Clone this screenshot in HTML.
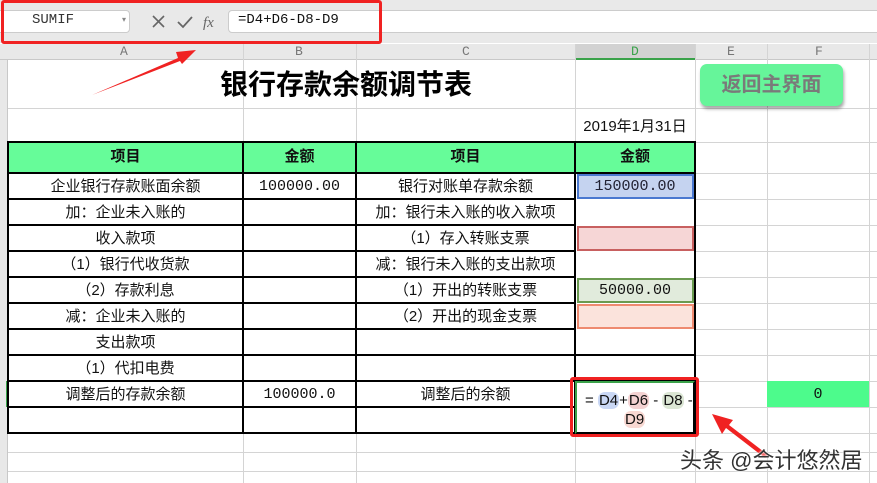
<!DOCTYPE html>
<html><head><meta charset="utf-8"><style>
*{margin:0;padding:0;box-sizing:border-box}
body{width:877px;height:483px;overflow:hidden;background:#fff;position:relative;font-family:"Liberation Sans","Noto Sans CJK SC",sans-serif;font-size:15px;color:#111}
.a{position:absolute}
.t{position:absolute;text-align:center;line-height:26px;white-space:nowrap}
.vl{position:absolute;width:1px;background:#d4d4d4}
.hl{position:absolute;height:1px;background:#d4d4d4}
.bv{position:absolute;width:2px;background:#000}
.bh{position:absolute;height:2px;background:#000}
.mono{font-family:"Liberation Mono","Noto Sans CJK SC",monospace;font-size:15px}
</style></head><body>
<div class="a" style="left:0;top:0;width:877px;height:43px;background:#e9e9e9"></div>
<div class="a" style="left:-5px;top:10px;width:135px;height:23px;background:#fff;border:1px solid #ccc;border-radius:4px"></div>
<div class="a mono" style="left:32px;top:12px;font-size:14px;color:#333">SUMIF</div>
<div class="a" style="left:122px;top:15px;font-size:8px;color:#888">▾</div>
<svg class="a" style="left:150px;top:12px" width="75" height="20"><path d="M3 4l11 11M14 4L3 15" stroke="#666" stroke-width="1.6" fill="none"/><path d="M28 10l5 5 9-10" stroke="#666" stroke-width="1.8" fill="none"/><text x="53" y="15" font-family="Liberation Serif" font-style="italic" font-size="15" fill="#666">fx</text></svg>
<div class="a" style="left:228px;top:10px;width:660px;height:23px;background:#fff;border:1px solid #ccc;border-radius:4px"></div>
<div class="a mono" style="left:238px;top:12px;font-size:14px;color:#111">=D4+D6-D8-D9</div>
<div class="a" style="left:1px;top:0px;width:381px;height:44px;border:3px solid #f02222;border-radius:3px"></div>
<div class="a" style="left:0;top:44px;width:877px;height:16px;background:#e8e8e8;border-bottom:1px solid #c8c8c8"></div>
<div class="a" style="left:575px;top:44px;width:120px;height:16px;background:#d2d2d2;border-bottom:2px solid #3aa24a"></div>
<div class="a" style="left:0;top:60px;width:8px;height:423px;background:#e8e8e8;border-right:1px solid #c8c8c8"></div>
<div class="a" style="left:6px;top:381px;width:2px;height:26px;background:#3aa24a"></div>
<div class="a mono" style="left:120px;top:44px;font-size:13px;color:#777;line-height:16px">A</div>
<div class="a mono" style="left:295px;top:44px;font-size:13px;color:#777;line-height:16px">B</div>
<div class="a mono" style="left:462px;top:44px;font-size:13px;color:#777;line-height:16px">C</div>
<div class="a mono" style="left:631px;top:44px;font-size:13px;color:#3aa24a;line-height:16px">D</div>
<div class="a mono" style="left:727px;top:44px;font-size:13px;color:#777;line-height:16px">E</div>
<div class="a mono" style="left:815px;top:44px;font-size:13px;color:#777;line-height:16px">F</div>
<div class="vl" style="left:243px;top:44px;height:439px"></div>
<div class="vl" style="left:356px;top:44px;height:439px"></div>
<div class="vl" style="left:575px;top:44px;height:439px"></div>
<div class="vl" style="left:695px;top:44px;height:439px"></div>
<div class="vl" style="left:767px;top:44px;height:439px"></div>
<div class="vl" style="left:869px;top:44px;height:439px"></div>
<div class="hl" style="left:8px;top:108px;width:869px"></div>
<div class="hl" style="left:8px;top:142px;width:869px"></div>
<div class="hl" style="left:695px;top:173px;width:182px"></div>
<div class="hl" style="left:695px;top:199px;width:182px"></div>
<div class="hl" style="left:695px;top:225px;width:182px"></div>
<div class="hl" style="left:695px;top:251px;width:182px"></div>
<div class="hl" style="left:695px;top:277px;width:182px"></div>
<div class="hl" style="left:695px;top:303px;width:182px"></div>
<div class="hl" style="left:695px;top:329px;width:182px"></div>
<div class="hl" style="left:695px;top:355px;width:182px"></div>
<div class="hl" style="left:695px;top:381px;width:182px"></div>
<div class="hl" style="left:695px;top:407px;width:182px"></div>
<div class="hl" style="left:8px;top:433px;width:869px"></div>
<div class="hl" style="left:8px;top:452px;width:869px"></div>
<div class="hl" style="left:8px;top:471px;width:869px"></div>
<div class="a" style="left:220px;top:63px;font-size:28px;font-weight:bold;color:#000">银行存款余额调节表</div>
<div class="a" style="left:700px;top:64px;width:143px;height:42px;background:#66f59a;border-radius:7px;box-shadow:1px 3px 3px rgba(0,0,0,.35);text-align:center;line-height:42px;font-size:20px;font-weight:bold;color:#7a7a7a">返回主界面</div>
<div class="t" style="left:575px;top:114px;width:120px">2019年1月31日</div>
<div class="a" style="left:8px;top:142px;width:687px;height:31px;background:#66fc99"></div>
<div class="t" style="left:8px;top:144px;width:235px;font-weight:bold">项目</div>
<div class="t" style="left:243px;top:144px;width:113px;font-weight:bold">金额</div>
<div class="t" style="left:356px;top:144px;width:219px;font-weight:bold">项目</div>
<div class="t" style="left:575px;top:144px;width:120px;font-weight:bold">金额</div>
<div class="a" style="left:577px;top:174px;width:117px;height:25px;background:#c5d3f0;border:2px solid #4a78d0"></div>
<div class="a" style="left:577px;top:226px;width:117px;height:25px;background:#f6d6d6;border:2px solid #c86060"></div>
<div class="a" style="left:577px;top:278px;width:117px;height:25px;background:#e1ebdc;border:2px solid #6a9a50"></div>
<div class="a" style="left:577px;top:304px;width:117px;height:25px;background:#fbe3dc;border:2px solid #ee8a70"></div>
<div class="a" style="left:767px;top:381px;width:102px;height:26px;background:#4dfb8c"></div>
<div class="bv" style="left:7px;top:141px;height:293px"></div>
<div class="bv" style="left:242px;top:141px;height:293px"></div>
<div class="bv" style="left:355px;top:141px;height:293px"></div>
<div class="bv" style="left:574px;top:141px;height:293px"></div>
<div class="bv" style="left:694px;top:141px;height:293px"></div>
<div class="bh" style="left:7px;top:141px;width:689px"></div>
<div class="bh" style="left:7px;top:172px;width:689px"></div>
<div class="bh" style="left:7px;top:198px;width:569px"></div>
<div class="bh" style="left:7px;top:224px;width:569px"></div>
<div class="bh" style="left:7px;top:250px;width:569px"></div>
<div class="bh" style="left:7px;top:276px;width:569px"></div>
<div class="bh" style="left:7px;top:302px;width:569px"></div>
<div class="bh" style="left:7px;top:328px;width:569px"></div>
<div class="bh" style="left:7px;top:354px;width:689px"></div>
<div class="bh" style="left:7px;top:380px;width:689px"></div>
<div class="bh" style="left:7px;top:406px;width:569px"></div>
<div class="bh" style="left:7px;top:432px;width:689px"></div>
<div class="t" style="left:8px;top:174px;width:235px">企业银行存款账面余额</div>
<div class="t mono" style="left:243px;top:174px;width:113px">100000.00</div>
<div class="t" style="left:356px;top:174px;width:219px">银行对账单存款余额</div>
<div class="t mono" style="left:575px;top:174px;width:120px;color:#223">150000.00</div>
<div class="t" style="left:8px;top:200px;width:235px">加：企业未入账的</div>
<div class="t" style="left:356px;top:200px;width:219px">加：银行未入账的收入款项</div>
<div class="t" style="left:8px;top:226px;width:235px">收入款项</div>
<div class="t" style="left:356px;top:226px;width:219px">（1）存入转账支票</div>
<div class="t" style="left:8px;top:252px;width:235px">（1）银行代收货款</div>
<div class="t" style="left:356px;top:252px;width:219px">减：银行未入账的支出款项</div>
<div class="t" style="left:8px;top:278px;width:235px">（2）存款利息</div>
<div class="t" style="left:356px;top:278px;width:219px">（1）开出的转账支票</div>
<div class="t mono" style="left:575px;top:278px;width:120px">50000.00</div>
<div class="t" style="left:8px;top:304px;width:235px">减：企业未入账的</div>
<div class="t" style="left:356px;top:304px;width:219px">（2）开出的现金支票</div>
<div class="t" style="left:8px;top:330px;width:235px">支出款项</div>
<div class="t" style="left:8px;top:356px;width:235px">（1）代扣电费</div>
<div class="t" style="left:8px;top:382px;width:235px">调整后的存款余额</div>
<div class="t mono" style="left:243px;top:382px;width:113px">100000.0</div>
<div class="t" style="left:356px;top:382px;width:219px">调整后的余额</div>
<div class="t mono" style="left:767px;top:382px;width:102px">0</div>
<div class="a" style="left:575px;top:381px;width:120px;height:53px;background:#fff;border-left:2px solid #3aa24a;border-right:2px solid #000;border-bottom:2px solid #000;border-top:2px solid #3aa24a"></div>
<div class="a" style="left:585px;top:391px;font-size:15px;line-height:20px;white-space:nowrap">= <span style="background:#c9d7f4;border-radius:7px;padding:0 1px">D4</span>+<span style="background:#f3d2d2;border-radius:7px;padding:0 1px">D6</span> - <span style="background:#dbe6d4;border-radius:7px;padding:0 1px">D8</span> -</div>
<div class="a" style="left:624px;top:410px;font-size:15px;line-height:20px"><span style="background:#f8d8d2;border-radius:7px;padding:0 1px">D9</span></div>
<div class="a" style="left:570px;top:377px;width:129px;height:60px;border:3px solid #f02222;border-radius:3px"></div>
<svg class="a" style="left:0;top:0" width="877" height="483">
<path d="M92 95 L178 58 L176 52 L196 50 L182 64 L180 61 Z" fill="#f02222"/>
<path d="M765 458 L726 428 L722 434 L712 414 L733 420 L729 425 L768 455 Z" fill="#f02222"/>
</svg>
<div class="a" style="left:680px;top:443px;font-size:22px;color:#333;text-shadow:0 0 2px #fff,0 0 2px #fff">头条 @会计悠然居</div>
</body></html>
